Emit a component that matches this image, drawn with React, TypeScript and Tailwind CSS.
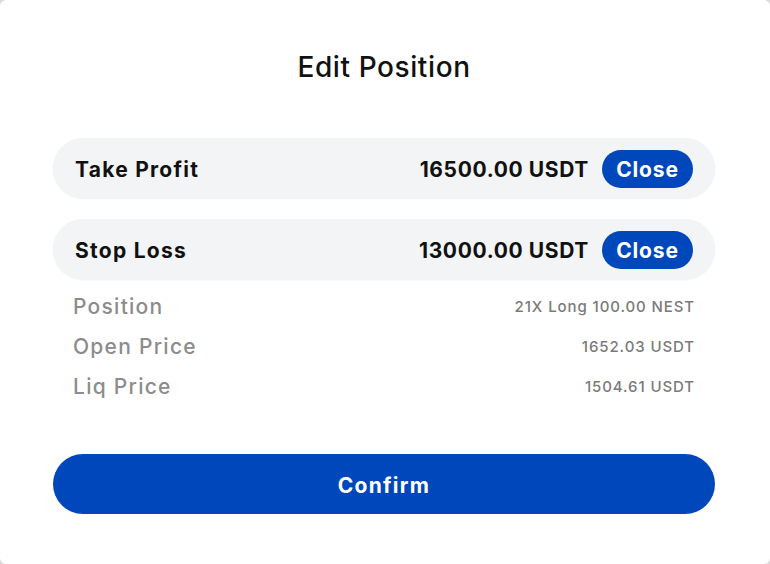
const rows = [
  { label: "Take Profit", value: "16500.00 USDT" },
  { label: "Stop Loss", value: "13000.00 USDT" },
];

const info = [
  { label: "Position", value: "21X Long 100.00 NEST" },
  { label: "Open Price", value: "1652.03 USDT" },
  { label: "Liq Price", value: "1504.61 USDT" },
];

export default function App() {
  return (
    <div className="h-[564px] w-[770px] bg-[#d9d9d9] font-['Inter',sans-serif]">
      <div className="flex h-full w-full flex-col rounded-[6px] bg-white pl-[53px] pr-[55px]">
        <h1 className="mt-[50px] text-center text-[28px] font-medium leading-[34px] tracking-[0.6px] text-[#111]">
          Edit Position
        </h1>

        <div className="mt-[54px] flex flex-col gap-[21px]">
          {rows.map((r) => (
            <div
              key={r.label}
              className="flex h-[60px] items-center justify-between rounded-full bg-[#f3f4f6] px-[22px] pt-[2px] shadow-[0_1px_2px_rgba(0,0,0,0.06)]"
            >
              <span className="pt-[2px] text-[21px] font-bold tracking-[0.06em] text-[#111]">{r.label}</span>
              <div className="flex items-center gap-[13px]">
                <span className="pt-[2px] text-[21px] font-bold tracking-[0.03em] text-[#111]">{r.value}</span>
                <button className="h-[38px] w-[91px] rounded-full bg-[#0047bb] pt-[2px] text-[21px] font-bold tracking-[0.04em] text-white">
                  Close
                </button>
              </div>
            </div>
          ))}
        </div>

        <div className="mt-[8px] flex flex-col px-[20px]">
          {info.map((i) => (
            <div key={i.label} className="flex h-[40px] items-center justify-between">
              <span className="text-[21px] font-medium tracking-[0.06em] text-[#8c8c8c]">{i.label}</span>
              <span className="text-[15px] font-medium tracking-[0.06em] text-[#7a7a7a]">{i.value}</span>
            </div>
          ))}
        </div>

        <button className="mt-[47px] h-[60px] w-full rounded-full bg-[#0047bb] pt-[3px] text-[21px] font-bold tracking-[0.06em] text-white">
          Confirm
        </button>
      </div>
    </div>
  );
}
